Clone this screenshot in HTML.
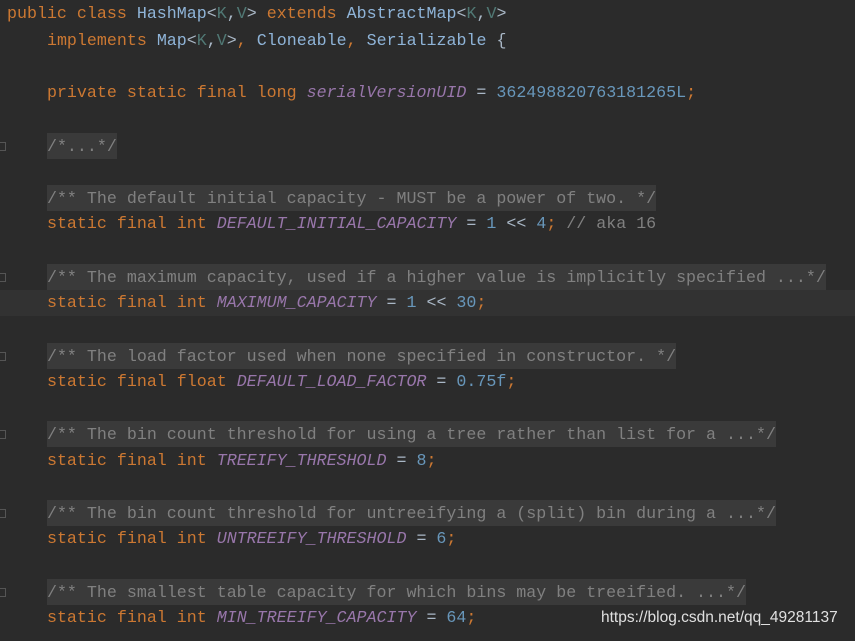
<!DOCTYPE html>
<html><head><style>
body{margin:0;width:855px;height:641px;background:#2b2b2b;overflow:hidden;position:relative;font-family:"Liberation Mono",monospace;font-size:16.65px;}
.l{position:absolute;left:7px;height:26px;line-height:26px;white-space:pre;color:#a9b7c6}
.k{color:#cc7832}.c{color:#8fb4d8}.t{color:#507874}.n{color:#6897bb}.i{color:#9876aa;font-style:italic}
.m{color:#808080;background:#3a3a3a;display:inline-block;height:26px;line-height:27px;vertical-align:top}
.g{color:#808080}
.cur{position:absolute;left:0;top:290px;width:855px;height:26px;background:#323232}
.f{position:absolute;left:0;width:6px;height:9px;border:1px solid #555;border-left:none;box-sizing:border-box}
.w{position:absolute;left:601px;top:609px;font-family:"Liberation Sans",sans-serif;font-size:15.5px;color:#e0e0e0}
</style></head><body>
<div class="cur"></div>
<div class="f" style="top:142px"></div><div class="f" style="top:273px"></div><div class="f" style="top:352px"></div><div class="f" style="top:430px"></div><div class="f" style="top:509px"></div><div class="f" style="top:588px"></div>
<div class="l" style="top:1px"><span class="k">public class </span><span class="c">HashMap</span>&lt;<span class="t">K</span>,<span class="t">V</span>&gt; <span class="k">extends </span><span class="c">AbstractMap</span>&lt;<span class="t">K</span>,<span class="t">V</span>&gt;</div>
<div class="l" style="top:28px">    <span class="k">implements </span><span class="c">Map</span>&lt;<span class="t">K</span>,<span class="t">V</span>&gt;<span class="k">, </span><span class="c">Cloneable</span><span class="k">, </span><span class="c">Serializable</span> {</div>
<div class="l" style="top:80px">    <span class="k">private static final long </span><span class="i">serialVersionUID</span> = <span class="n">362498820763181265L</span><span class="k">;</span></div>
<div class="l" style="top:133px">    <span class="m">/*...*/</span></div>
<div class="l" style="top:185px">    <span class="m">/** The default initial capacity - MUST be a power of two. */</span></div>
<div class="l" style="top:211px">    <span class="k">static final int </span><span class="i">DEFAULT_INITIAL_CAPACITY</span> = <span class="n">1</span> &lt;&lt; <span class="n">4</span><span class="k">; </span><span class="g">// aka 16</span></div>
<div class="l" style="top:264px">    <span class="m">/** The maximum capacity, used if a higher value is implicitly specified ...*/</span></div>
<div class="l" style="top:290px">    <span class="k">static final int </span><span class="i">MAXIMUM_CAPACITY</span> = <span class="n">1</span> &lt;&lt; <span class="n">30</span><span class="k">;</span></div>
<div class="l" style="top:343px">    <span class="m">/** The load factor used when none specified in constructor. */</span></div>
<div class="l" style="top:369px">    <span class="k">static final float </span><span class="i">DEFAULT_LOAD_FACTOR</span> = <span class="n">0.75f</span><span class="k">;</span></div>
<div class="l" style="top:421px">    <span class="m">/** The bin count threshold for using a tree rather than list for a ...*/</span></div>
<div class="l" style="top:448px">    <span class="k">static final int </span><span class="i">TREEIFY_THRESHOLD</span> = <span class="n">8</span><span class="k">;</span></div>
<div class="l" style="top:500px">    <span class="m">/** The bin count threshold for untreeifying a (split) bin during a ...*/</span></div>
<div class="l" style="top:526px">    <span class="k">static final int </span><span class="i">UNTREEIFY_THRESHOLD</span> = <span class="n">6</span><span class="k">;</span></div>
<div class="l" style="top:579px">    <span class="m">/** The smallest table capacity for which bins may be treeified. ...*/</span></div>
<div class="l" style="top:605px">    <span class="k">static final int </span><span class="i">MIN_TREEIFY_CAPACITY</span> = <span class="n">64</span><span class="k">;</span></div>
<div class="w">https://blog.csdn.net/qq_49281137</div>
</body></html>
